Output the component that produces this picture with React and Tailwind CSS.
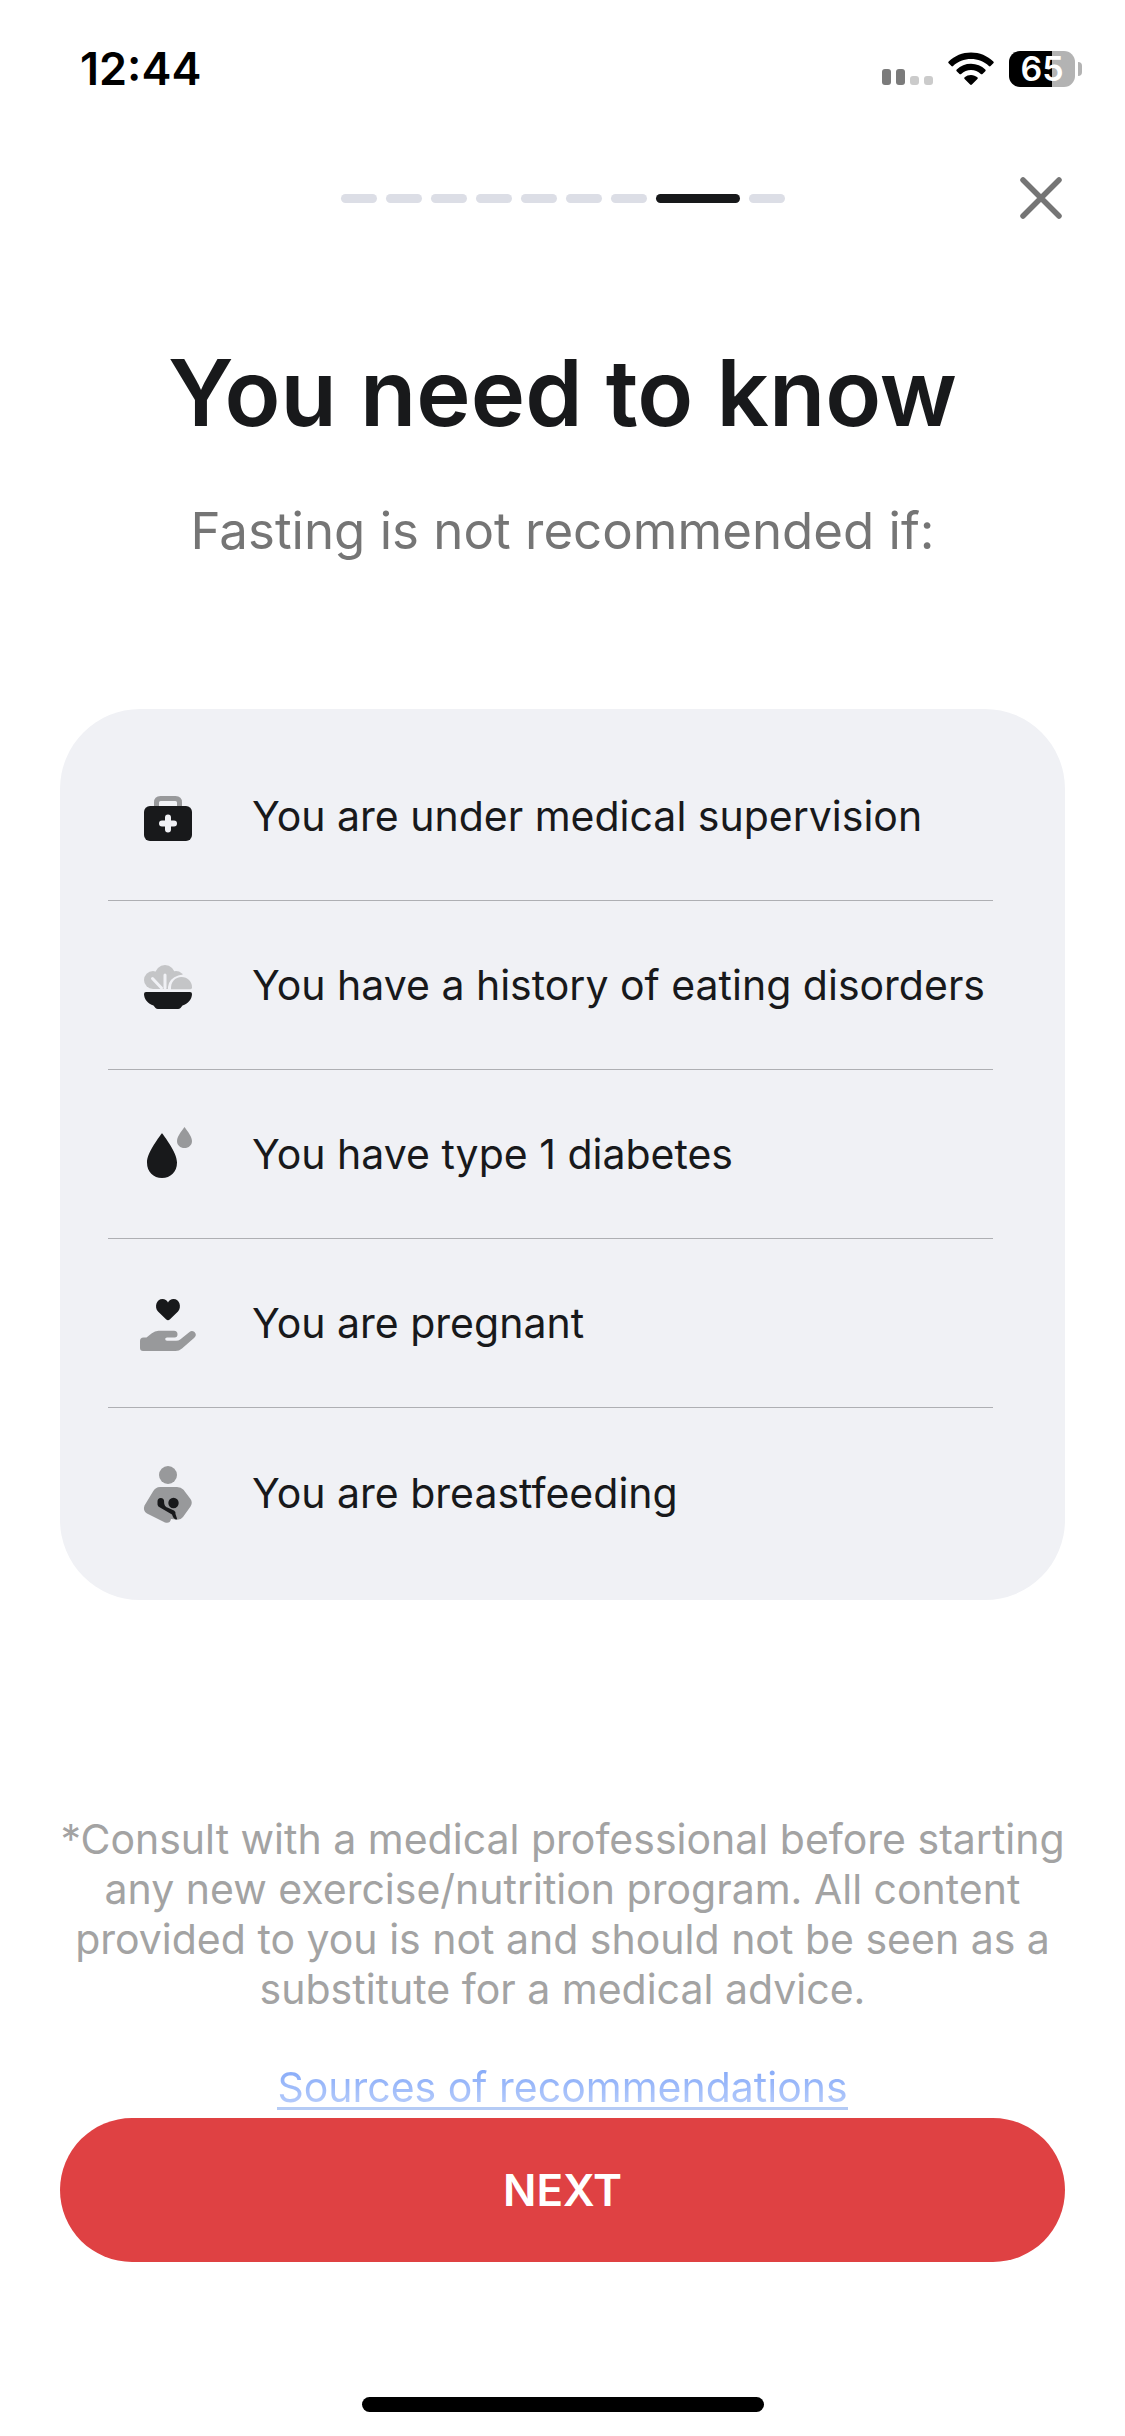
import React from "react";

const INK = "#18191b";
const GREY = "#98999b";

function MedicalBagIcon() {
  return (
    <>
      <path d="M18.5 21v-4.5q0-4 4-4h15q4 0 4 4V21" fill="none" stroke={GREY} strokeWidth="5" />
      <rect x="6" y="20" width="48" height="35" rx="6" fill={INK} />
      <path d="M30 31.5v12M24 37.5h12" stroke="#f0f1f5" strokeWidth="6" strokeLinecap="round" />
    </>
  );
}

function SaladIcon() {
  return (
    <>
      <g fill="#c4c5c7">
        <circle cx="15" cy="25" r="9" />
        <circle cx="27" cy="20" r="10" />
        <circle cx="38" cy="24" r="8" />
        <path d="M15 20h25v14H15z" />
      </g>
      <path d="M27 20v13M14.5 23.5l9 9.5" stroke="#f0f1f5" strokeWidth="3" strokeLinecap="round" />
      <path d="M30 36v-4a14.5 13 0 0 1 26-7v11z" fill="#f0f1f5" />
      <path d="M33 34.2c-.5-7 4-12.2 10.5-12.2 6 0 10.5 4.500 10.500 10.200q0 2-1.500 2z" fill="#c4c5c7" />
      <path d="M6 39q0-2 2-2h44q2 0 2 2c0 5-4 10-9.5 11.5L42.500 53q-1 1-2.500 1H20q-1.500 0-2.500-1l-2-2.500C10 49 6 44 6 39z" fill={INK} />
    </>
  );
}

function DropsIcon() {
  return (
    <>
      <path d="M24 9c1.500 2.500 15 19 15 29.500C39 48 32.500 54 24 54S9 48 9 38.500C9 28 22.500 11.500 24 9z" fill={INK} />
      <path d="M46.500 3C47.200 4.200 54 12 54 17c0 4.300-3.300 7-7.500 7S39 21.300 39 17c0-5 6.800-12.800 7.500-14z" fill={GREY} />
    </>
  );
}

function CareIcon() {
  return (
    <>
      <path d="M30 27.200q-1 0-2-1L20 18.500c-4-4.500-1.500-12.500 4.500-12.500 2.500 0 4.500 1.500 5.500 3.500C31 7.500 33 6 35.500 6c6 0 8.500 8 4.500 12.500l-8 7.700q-1 1-2 1z" fill={INK} />
      <path d="M2 48q0-3.500 3.500-3.500h3l5-4q3.500-2.700 7-2.700H36q3.500 0 3.500 3.500T36 44.500H29q-1.800 0-1.800 1.600T29 47.700h9q2.500 0 4.500-1.500l9-7.300q2.500-2 5 .2 2.800 3-.2 5.700L44 55.500Q41 58 37.500 58H5q-3 0-3-3z" fill={GREY} />
    </>
  );
}

function NursingIcon() {
  return (
    <>
      <circle cx="30" cy="12" r="9" fill={GREY} />
      <path d="M22 24h17q4 0 6.500 2.800l7 9.200q2.500 3.500 0 7.500l-7.500 10.500q-2 2.800-5.500 2.800L33 56q-1 5-6 3.500L9 50.500q-4.500-2.500-2.500-8l8.500-14Q17.500 24 22 24z" fill={GREY} />
      <circle cx="35.5" cy="40" r="5.2" fill={INK} />
      <path d="M19.500 38.500q0-3.500 3.300-3.500t3.300 3.500c0 4 1.400 5.500 4.400 6.500l5.500 2.500q2 1 1.500 3.500l1.500 4.500q.5 1-1 1-2.500-.5-4-5L22 44.500q-2.500-1-2.500-3z" fill={INK} />
    </>
  );
}

const conditions = [
  { label: "You are under medical supervision", Icon: MedicalBagIcon },
  { label: "You have a history of eating disorders", Icon: SaladIcon },
  { label: "You have type 1 diabetes", Icon: DropsIcon },
  { label: "You are pregnant", Icon: CareIcon },
  { label: "You are breastfeeding", Icon: NursingIcon },
];

function StatusBar() {
  return (
    <div className="flex h-[138px] items-center justify-between pl-20 pr-[43px] text-black">
      <time className="text-[45px] font-semibold leading-[56px]">12:44</time>
      <div className="flex items-center">
        <svg viewBox="0 0 52 34" className="mr-[14px] h-[34px] w-[52px]" role="img" aria-label="Signal strength">
          <rect x="0" y="17" width="9" height="16" rx="3" fill="#7b7b7b" />
          <rect x="14" y="17" width="9" height="16" rx="3" fill="#7b7b7b" />
          <rect x="28" y="24" width="9" height="9" rx="3" fill="#cbcbcb" />
          <rect x="42" y="24" width="9" height="9" rx="3" fill="#cbcbcb" />
        </svg>
        <svg viewBox="0 0 46 34" className="mr-[15px] h-[34px] w-[46px]" role="img" aria-label="Wi-Fi">
          <path d="M23 0.500c8.500 0 16.500 3.300 22.300 9q.9.900 0 1.800l-2.700 2.700q-.8.800-1.700 0C36 9.300 29.800 7 23 7S10 9.300 5.100 14q-.9.800-1.700 0L.7 11.300q-.9-.9 0-1.800C6.500 3.800 14.500.5 23 .5z" />
          <path d="M23 11.700c5.500 0 10.500 2.100 14.300 5.700q.9.900 0 1.800l-2.800 2.700q-.8.800-1.700.1a14.300 14.300 0 0 0-19.600 0q-.9.700-1.700-.1l-2.800-2.700q-.9-.9 0-1.800A20.700 20.700 0 0 1 23 11.700z" />
          <path d="M23 22.900c2.500 0 4.700.9 6.400 2.400q.9.900 0 1.800l-5.500 5.500q-.9.800-1.800 0l-5.500-5.500q-.9-.9 0-1.800A9.600 9.600 0 0 1 23 22.900z" />
        </svg>
        <div className="flex h-9 w-[66px] items-center justify-center rounded-[11px] bg-linear-to-r from-black from-65% to-[#b3b3b3] to-65% text-[34px] font-semibold leading-9 text-white">
          65
        </div>
        <span className="ml-[3px] h-[14px] w-1 rounded-r-full bg-[#b3b3b3]" />
      </div>
    </div>
  );
}

function StepHeader() {
  return (
    <header className="grid grid-cols-[1fr_auto_1fr] items-center px-[54px] pt-[30px]">
      <span />
      <div className="flex gap-[9px]" role="progressbar" aria-label="Step" aria-valuemin={1} aria-valuemax={9} aria-valuenow={8}>
        {Array.from({ length: 9 }, (_, i) => (
          <span key={i} className={i === 7 ? "h-[9px] w-[84px] rounded-full bg-[#17181a]" : "h-[9px] w-9 rounded-full bg-[#dcdee6]"} />
        ))}
      </div>
      <button type="button" aria-label="Close" className="flex size-[60px] items-center justify-center justify-self-end">
        <svg viewBox="0 0 42 42" className="size-[42px]" fill="none" stroke="#757575" strokeWidth="5.500" strokeLinecap="round">
          <path d="M3 3l36 36M39 3L3 39" />
        </svg>
      </button>
    </header>
  );
}

export default function App() {
  return (
    <div className="flex min-h-screen flex-col bg-white font-['Inter',sans-serif] text-[#18191b]">
      <StatusBar />
      <StepHeader />
      <main className="flex grow flex-col px-[60px] text-center">
        <h1 className="mt-[111px] text-[92px] font-semibold leading-[108px]">You need to know</h1>
        <p className="mt-[52px] text-[51px] leading-[64px] text-[#757575]">Fasting is not recommended if:</p>
        <ul className="mt-[146px] rounded-[80px] bg-[#f0f1f5] py-[23px] pl-12 pr-[72px] text-left">
          {conditions.map(({ label, Icon }) => (
            <li key={label} className="flex h-[169px] items-center gap-[54px] border-b border-[#aeafb3] pl-[30px] last:border-b-0">
              <svg viewBox="0 0 60 60" className="size-[60px] shrink-0 overflow-visible" aria-hidden="true">
                <Icon />
              </svg>
              <span className="whitespace-nowrap text-[41px] leading-[50px]">{label}</span>
            </li>
          ))}
        </ul>
        <p className="mt-[214px] text-[41px] leading-[50px] text-[#a3a3a3]">
          *Consult with a medical professional before starting any new exercise/nutrition program. All content provided to you is not and should not be seen as a substitute for a medical advice.
        </p>
        <a
          href="#sources"
          className="mt-[53px] self-center border-b-[3px] border-[#b5cbf5] bg-linear-to-b from-[#84a8f8] to-[#b9cefb] bg-clip-text text-[41px] leading-10 text-transparent"
        >
          Sources of recommendations
        </a>
        <button type="button" className="mt-2 h-36 w-full rounded-full bg-[#df4143] text-[44px] font-semibold text-white">
          NEXT
        </button>
      </main>
      <div className="mx-auto mb-6 h-[15px] w-[402px] rounded-full bg-black" />
    </div>
  );
}
